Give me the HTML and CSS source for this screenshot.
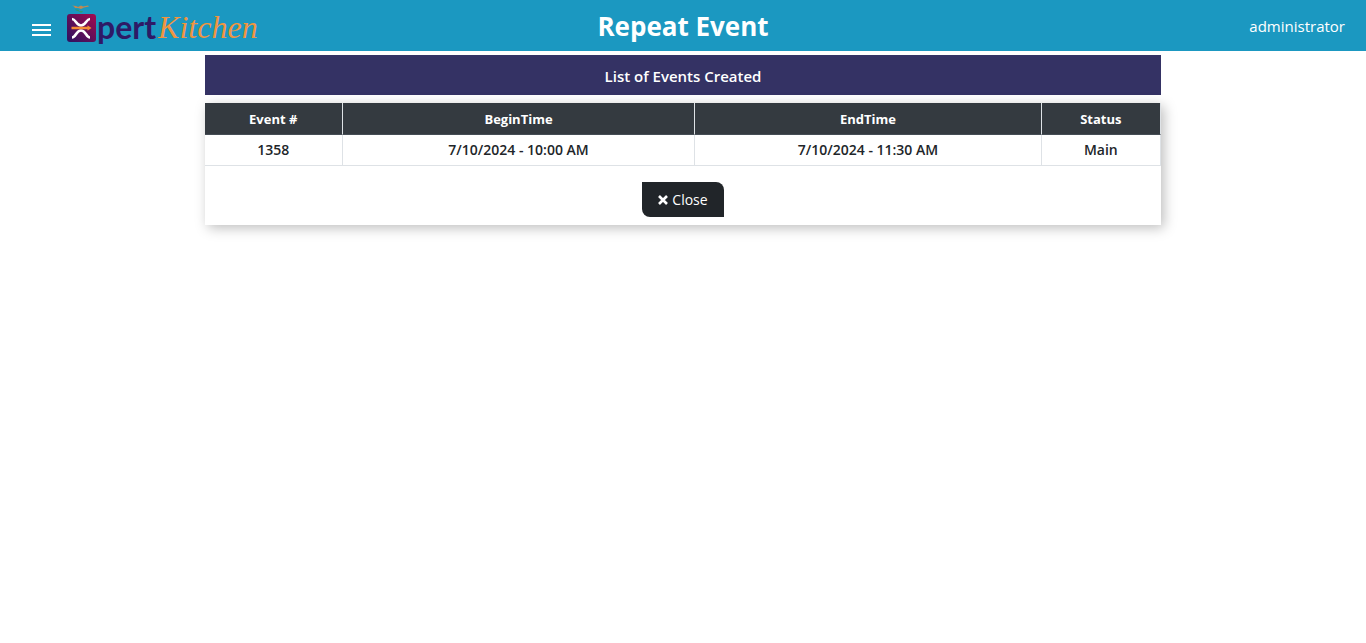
FILE: index.html
```html
<!DOCTYPE html>
<html lang="en">
<head>
<meta charset="utf-8">
<meta name="viewport" content="width=device-width, initial-scale=1">
<title>Repeat Event</title>
<link rel="stylesheet" href="styles.css">
</head>
<body>
<header class="topbar">
  <div class="topbar-left">
    <button class="menu-button" type="button" aria-label="Menu">
      <svg width="19" height="12" viewBox="0 0 19 12" aria-hidden="true"><path d="M0 0h19v2H0zM0 5h19v2H0zM0 10h19v2H0z" fill="#fff"/></svg>
    </button>
    <a class="brand" href="#">
      <svg class="brand-mark" width="30" height="42" viewBox="0 0 30 42" aria-hidden="true">
        <defs>
          <linearGradient id="mark" x1="0" y1="1" x2="1" y2="0">
            <stop offset="0" stop-color="#2c1262"/>
            <stop offset="0.5" stop-color="#620f58"/>
            <stop offset="1" stop-color="#a50a4e"/>
          </linearGradient>
        </defs>
        <path d="M5 0.500l4 0.500 2 1 3-1.500 2 1 5-1 1 1-5 1-3 1.500-3-1-3 0-1-1.500z" fill="#c08a52"/>
        <path d="M8 4l4 1 0 1.500-3-1zM12 6l4 0-1 1.500-2 0z" fill="#2f9a72"/>
        <rect x="0" y="9" width="29" height="28" rx="3" fill="url(#mark)"/>
        <path d="M5 14c4 0 4 6.500 9 6.500s5-6.500 9-6.500M5 32.500c4 0 4-7 9-7s5 7 9 7" fill="none" stroke="#fff" stroke-width="2.600"/>
        <path d="M4.500 21.800h16v-1.500l4 2.700-4 2.700v-1.500h-16z" fill="#f58b34"/>
      </svg>
      <span class="brand-pert">pert</span><span class="brand-kitchen">Kitchen</span>
    </a>
  </div>
  <h1 class="page-title">Repeat Event</h1>
  <div class="user-name">administrator</div>
</header>
<main class="content">
  <h2 class="list-title">List of Events Created</h2>
  <section class="card">
    <table class="events">
      <colgroup><col class="col-id"><col class="col-begin"><col class="col-end"><col class="col-status"></colgroup>
      <thead>
        <tr><th scope="col">Event #</th><th scope="col">BeginTime</th><th scope="col">EndTime</th><th scope="col">Status</th></tr>
      </thead>
      <tbody>
        <tr><td>1358</td><td>7/10/2024 - 10:00 AM</td><td>7/10/2024 - 11:30 AM</td><td>Main</td></tr>
      </tbody>
    </table>
    <div class="actions">
      <button class="close-button" type="button">
        <svg width="10" height="10" viewBox="0 0 10 10" aria-hidden="true"><path d="M1 1l8 8M9 1l-8 8" stroke="#fff" stroke-width="2.600"/></svg>
        Close
      </button>
    </div>
  </section>
</main>
</body>
</html>
```

FILE: styles.css
```css
* {
  box-sizing: border-box;
}

body {
  min-height: 100vh;
  margin: 0;
  background: #fff;
  color: #212529;
  font-family: "Segoe UI", "Open Sans", "Noto Sans", sans-serif;
}

.topbar {
  display: grid;
  grid-template-columns: 1fr auto 1fr;
  align-items: center;
  height: 51px;
  background: #1b98c1;
  color: #fff;
}

.topbar-left {
  display: flex;
  align-items: center;
  gap: 16px;
  padding-left: 32px;
}

.menu-button {
  display: flex;
  padding: 8px 0 0;
  border: 0;
  background: none;
  cursor: pointer;
}

.brand {
  display: flex;
  align-items: center;
  line-height: 38px;
  text-decoration: none;
}

.brand-mark {
  display: block;
}

.brand-pert {
  padding-top: 2px;
  color: #2e1a66;
  font-family: Lato, sans-serif;
  font-size: 32px;
  font-weight: 700;
}

.brand-kitchen {
  padding: 2px 0 0 2px;
  color: #f0953f;
  font-family: "Liberation Serif", serif;
  font-size: 32px;
  font-style: italic;
}

.page-title {
  margin: 0;
  font-size: 26px;
  line-height: 48px;
  font-weight: 700;
}

.user-name {
  padding-right: 21px;
  font-size: 15px;
  text-align: right;
}

.content {
  width: 70%;
  margin: 0 auto;
  padding-top: 4px;
}

.list-title {
  margin: 0 0 8px;
  padding: 9px 8px 7px;
  background: #343264;
  color: #fff;
  font-size: 15px;
  line-height: 24px;
  font-weight: 600;
  text-align: center;
}

.card {
  background: #fff;
  box-shadow: 3px 3px 12px rgba(0, 0, 0, 0.26);
}

.events {
  width: 100%;
  border-collapse: separate;
  border-spacing: 0;
  table-layout: fixed;
  font-size: 13px;
  line-height: 20px;
  text-align: center;
}

.col-id {
  width: 14.4%;
}

.col-begin {
  width: 36.9%;
}

.col-end {
  width: 36.2%;
}

.col-status {
  width: 12.5%;
}

.events th,
.events td {
  padding: 5px;
  border-right: 1px solid #dee2e6;
  border-bottom: 1px solid #dee2e6;
}

.events th {
  padding-top: 6px;
  border-bottom-color: #454d55;
  background: #343a40;
  color: #fff;
  font-weight: 700;
}

.events td {
  font-size: 14px;
  font-weight: 600;
}

.actions {
  display: flex;
  justify-content: center;
  padding: 16px 8px 8px;
}

.close-button {
  display: flex;
  align-items: center;
  gap: 4px;
  padding: 6px 16px 5px;
  border: 0;
  border-radius: 0 8px 0 8px;
  background: #212529;
  color: #fff;
  font-family: inherit;
  font-size: 14px;
  line-height: 24px;
  cursor: pointer;
}
```
